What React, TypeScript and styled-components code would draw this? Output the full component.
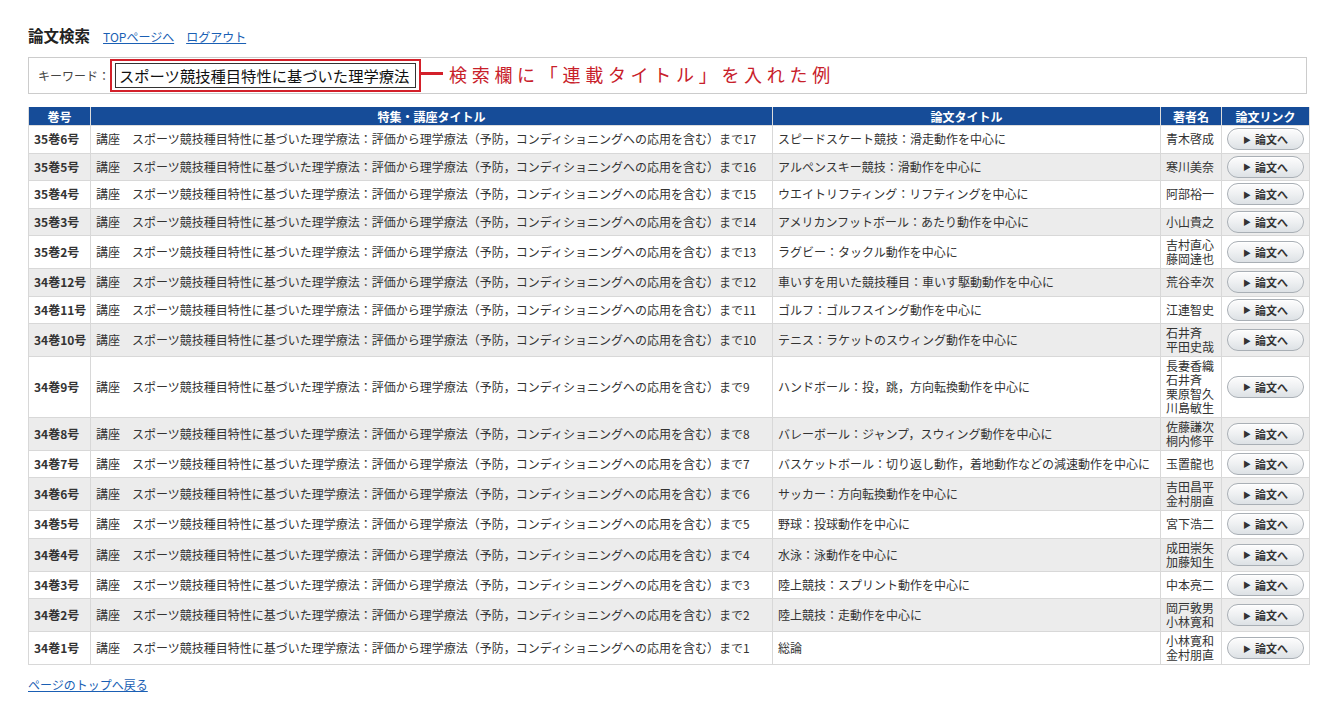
import React from "react";
import styled, { createGlobalStyle } from "styled-components";

const GlobalStyle = createGlobalStyle`
  body {
    margin: 0;
    background: #fff;
    color: #333;
    font-family: "Noto Sans CJK JP", "Liberation Sans", sans-serif;
    font-size: 12px;
  }
`;

const Page = styled.div`
  width: 1281px;
  padding: 24px 0 0 28px;
`;

const TitleBar = styled.div`
  display: flex;
  align-items: baseline;
  gap: 12px;
  height: 22px;
`;

const Title = styled.h1`
  margin: 0 1px 0 0;
  font-size: 15.5px;
  font-weight: bold;
  color: #222;
`;

const Link = styled.a`
  color: #1a5fb4;
  font-size: 12px;
  text-decoration: underline;
  cursor: pointer;
`;

const SearchBox = styled.div`
  display: flex;
  align-items: center;
  margin-top: 11px;
  width: 1279px;
  height: 37px;
  border: 1px solid #ccc;
  padding-left: 9px;
  box-sizing: border-box;
`;

const Label = styled.span`
  font-size: 12px;
  color: #444;
`;

const Highlight = styled.div`
  border: 2px solid #d3202a;
  padding: 2px 3px;
`;

const KeywordInput = styled.div`
  width: 296px;
  height: 23px;
  border: 1px solid #333;
  font-size: 15.3px;
  line-height: 23px;
  padding-left: 3px;
  color: #111;
  white-space: nowrap;
  overflow: hidden;
`;

const Connector = styled.div`
  width: 22px;
  height: 3px;
  background: #d3202a;
  margin: 0 6px 4px 0;
`;

const Note = styled.span`
  color: #c8202a;
  font-size: 18px;
  letter-spacing: 4.7px;
  margin-bottom: 4px;
`;

const Table = styled.table`
  margin-top: 13px;
  border-collapse: collapse;
  table-layout: fixed;
  width: 1281px;
`;

const Th = styled.th`
  background: #164c98;
  color: #fff;
  font-size: 12px;
  font-weight: bold;
  height: 18px;
  padding: 0;
  line-height: 17px;
  border: 1px solid #dcdcdc;
  border-top: none;
`;

const Row = styled.tr`
  &:nth-child(even) {
    background: #ececec;
  }
`;

const Td = styled.td<{ $bold?: boolean; $center?: boolean }>`
  border: 1px solid #d8d8d8;
  padding: 2.25px 5px;
  font-size: 12px;
  line-height: 13.75px;
  font-weight: ${(p) => (p.$bold ? "bold" : "normal")};
  text-align: ${(p) => (p.$center ? "center" : "left")};
  white-space: nowrap;
  vertical-align: middle;
`;

const PaperButton = styled.button`
  display: inline-flex;
  align-items: center;
  justify-content: center;
  gap: 4px;
  width: 77px;
  height: 22px;
  vertical-align: middle;
  border: 1px solid #a9afb5;
  border-radius: 11px;
  background: linear-gradient(#fdfdfd 0%, #eef0f2 50%, #dde1e5 100%);
  box-shadow: inset 0 1px 0 #fff;
  font-family: "Noto Sans CJK JP", sans-serif;
  font-size: 11px;
  font-weight: bold;
  color: #333;
  padding: 0;
  cursor: pointer;
`;

const Arrow = styled.span`
  font-size: 8px;
  color: #333;
`;

const Footer = styled.div`
  margin-top: 11px;
`;

const series =
  "講座　スポーツ競技種目特性に基づいた理学療法：評価から理学療法（予防，コンディショニングへの応用を含む）まで";

type Paper = { issue: string; no: number; title: string; authors: string[] };

const papers: Paper[] = [
  { issue: "35巻6号", no: 17, title: "スピードスケート競技：滑走動作を中心に", authors: ["青木啓成"] },
  { issue: "35巻5号", no: 16, title: "アルペンスキー競技：滑動作を中心に", authors: ["寒川美奈"] },
  { issue: "35巻4号", no: 15, title: "ウエイトリフティング：リフティングを中心に", authors: ["阿部裕一"] },
  { issue: "35巻3号", no: 14, title: "アメリカンフットボール：あたり動作を中心に", authors: ["小山貴之"] },
  { issue: "35巻2号", no: 13, title: "ラグビー：タックル動作を中心に", authors: ["吉村直心", "藤岡達也"] },
  { issue: "34巻12号", no: 12, title: "車いすを用いた競技種目：車いす駆動動作を中心に", authors: ["荒谷幸次"] },
  { issue: "34巻11号", no: 11, title: "ゴルフ：ゴルフスイング動作を中心に", authors: ["江連智史"] },
  { issue: "34巻10号", no: 10, title: "テニス：ラケットのスウィング動作を中心に", authors: ["石井斉", "平田史哉"] },
  { issue: "34巻9号", no: 9, title: "ハンドボール：投，跳，方向転換動作を中心に", authors: ["長妻香織", "石井斉", "栗原智久", "川島敏生"] },
  { issue: "34巻8号", no: 8, title: "バレーボール：ジャンプ，スウィング動作を中心に", authors: ["佐藤謙次", "桐内修平"] },
  { issue: "34巻7号", no: 7, title: "バスケットボール：切り返し動作，着地動作などの減速動作を中心に", authors: ["玉置龍也"] },
  { issue: "34巻6号", no: 6, title: "サッカー：方向転換動作を中心に", authors: ["吉田昌平", "金村朋直"] },
  { issue: "34巻5号", no: 5, title: "野球：投球動作を中心に", authors: ["宮下浩二"] },
  { issue: "34巻4号", no: 4, title: "水泳：泳動作を中心に", authors: ["成田崇矢", "加藤知生"] },
  { issue: "34巻3号", no: 3, title: "陸上競技：スプリント動作を中心に", authors: ["中本亮二"] },
  { issue: "34巻2号", no: 2, title: "陸上競技：走動作を中心に", authors: ["岡戸敦男", "小林寛和"] },
  { issue: "34巻1号", no: 1, title: "総論", authors: ["小林寛和", "金村朋直"] },
];

const App: React.FunctionComponent = () => {
  return (
    <Page>
      <GlobalStyle />
      <TitleBar>
        <Title>論文検索</Title>
        <Link>TOPページへ</Link>
        <Link>ログアウト</Link>
      </TitleBar>

      <SearchBox>
        <Label>キーワード：</Label>
        <Highlight>
          <KeywordInput>スポーツ競技種目特性に基づいた理学療法</KeywordInput>
        </Highlight>
        <Connector />
        <Note>検索欄に「連載タイトル」を入れた例</Note>
      </SearchBox>

      <Table>
        <colgroup>
          <col style={{ width: 62 }} />
          <col style={{ width: 682 }} />
          <col style={{ width: 388 }} />
          <col style={{ width: 61 }} />
          <col style={{ width: 88 }} />
        </colgroup>
        <thead>
          <tr>
            <Th>巻号</Th>
            <Th>特集・講座タイトル</Th>
            <Th>論文タイトル</Th>
            <Th>著者名</Th>
            <Th>論文リンク</Th>
          </tr>
        </thead>
        <tbody>
          {papers.map((p) => (
            <Row key={p.issue}>
              <Td $bold>{p.issue}</Td>
              <Td>
                {series}
                {p.no}
              </Td>
              <Td>{p.title}</Td>
              <Td>
                {p.authors.map((a) => (
                  <div key={a}>{a}</div>
                ))}
              </Td>
              <Td $center>
                <PaperButton>
                  <Arrow>▶</Arrow>論文へ
                </PaperButton>
              </Td>
            </Row>
          ))}
        </tbody>
      </Table>

      <Footer>
        <Link>ページのトップへ戻る</Link>
      </Footer>
    </Page>
  );
};

export default App;
